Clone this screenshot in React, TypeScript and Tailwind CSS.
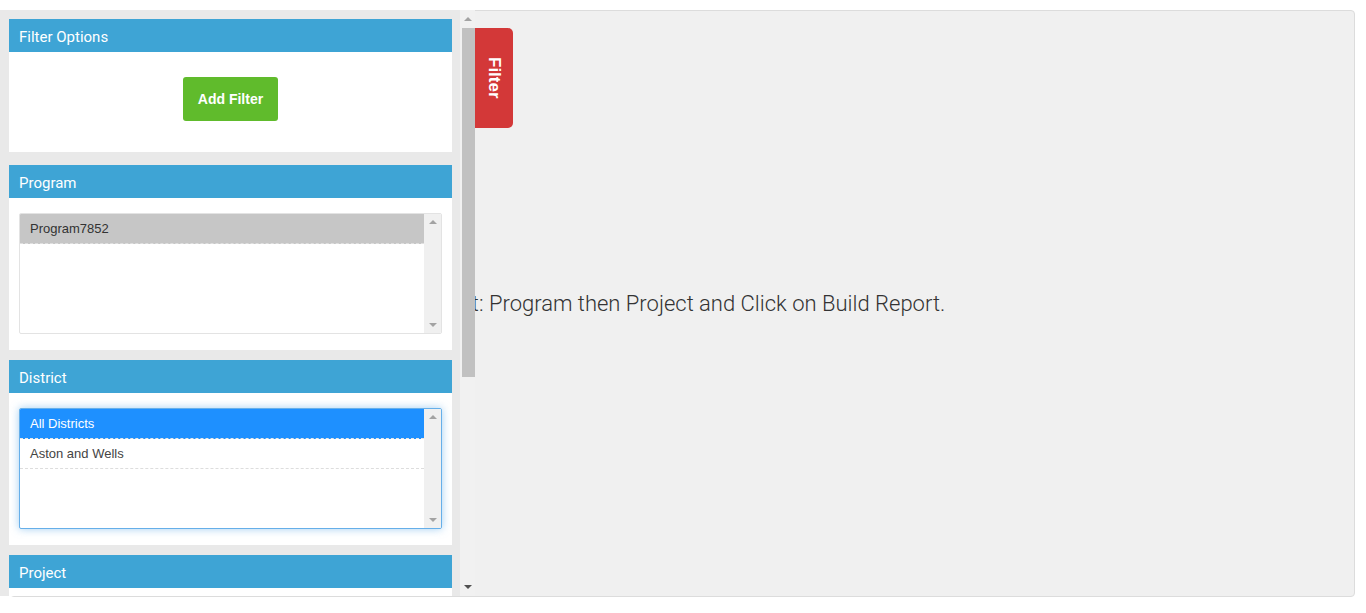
import React from 'react';

const sans = 'font-["Liberation_Sans",Arial,sans-serif]';

function PanelHeader({ title }: { title: string }) {
  return (
    <div className="h-[33px] bg-[#3ea4d5] pl-[10px] pt-[3px] flex items-center text-[15px] text-white font-['Roboto',sans-serif]">
      {title}
    </div>
  );
}

function ListScroll() {
  return (
    <div className="w-[17px] shrink-0 bg-[#f0f0f0] flex flex-col items-center justify-between pt-[6px] pb-[6px]">
      <span className="w-0 h-0 border-l-[4px] border-r-[4px] border-b-[4px] border-l-transparent border-r-transparent border-b-[#a3a3a3]" />
      <span className="w-0 h-0 border-l-[4px] border-r-[4px] border-t-[4px] border-l-transparent border-r-transparent border-t-[#a3a3a3]" />
    </div>
  );
}

interface Item {
  label: string;
  state?: 'selected' | 'active';
}

function ListBox({ items, focused }: { items: Item[]; focused?: boolean }) {
  return (
    <div
      className={`h-[121px] flex rounded-[2px] border overflow-hidden bg-white ${
        focused
          ? 'border-[#66afe9] shadow-[0_0_8px_rgba(102,175,233,0.6)]'
          : 'border-[#e3e3e3]'
      }`}
    >
      <ul className={`flex-1 min-w-0 ${sans} text-[13px]`}>
        {items.map((it) => (
          <li
            key={it.label}
            className={`h-[30px] pl-[10px] flex items-center border-b border-dashed ${
              it.state === 'active'
                ? 'bg-[#1e90ff] text-white border-b-[#e8e8e8]'
                : it.state === 'selected'
                  ? 'bg-[#c6c6c6] text-[#333] border-b-[#e0e0e0]'
                  : 'text-[#444] border-b-[#dddddd]'
            }`}
          >
            {it.label}
          </li>
        ))}
      </ul>
      <ListScroll />
    </div>
  );
}

export default function App() {
  return (
    <div className="relative h-[613px] bg-white overflow-hidden">
      <div className="pt-[10px] pl-[10px] pr-[11px]">
        <div className="h-[587px] bg-[#f0f0f0] border border-[#dcdcdc] rounded-[4px] flex items-center justify-center">
          <p className="text-[22px] font-light text-[#333] font-['Roboto',sans-serif]">
            Select: Program then Project and Click on Build Report.
          </p>
        </div>
      </div>

      <aside className="absolute left-0 top-[10px] h-[586px] flex">
        <div className="w-[460px] bg-[#e9e9e9] pl-[9px] pr-[8px] pt-[9px] overflow-hidden">
          <section className="mb-[13px]">
            <PanelHeader title="Filter Options" />
            <div className="h-[100px] bg-white flex justify-center pt-[25px]">
              <button
                type="button"
                className={`w-[95px] h-[44px] rounded-[3px] bg-[#60bb2c] text-white text-[14px] font-bold ${sans}`}
              >
                Add Filter
              </button>
            </div>
          </section>

          <section className="mb-[10px]">
            <PanelHeader title="Program" />
            <div className="h-[152px] bg-white pt-[15px] pl-[10px] pr-[10px]">
              <ListBox items={[{ label: 'Program7852', state: 'selected' }]} />
            </div>
          </section>

          <section className="mb-[10px]">
            <PanelHeader title="District" />
            <div className="h-[152px] bg-white pt-[15px] pl-[10px] pr-[10px]">
              <ListBox
                focused
                items={[{ label: 'All Districts', state: 'active' }, { label: 'Aston and Wells' }]}
              />
            </div>
          </section>

          <section>
            <PanelHeader title="Project" />
            <div className="h-[152px] bg-white" />
          </section>
        </div>

        <div className="w-[15px] bg-[#f1f1f1] flex flex-col">
          <div className="h-[18px] flex items-center justify-center">
            <span className="w-0 h-0 border-l-[4px] border-r-[4px] border-b-[4px] border-l-transparent border-r-transparent border-b-[#a3a3a3]" />
          </div>
          <div className="h-[349px] ml-[2px] bg-[#c1c1c1]" />
          <div className="flex-1" />
          <div className="h-[18px] flex items-center justify-center">
            <span className="w-0 h-0 border-l-[4px] border-r-[4px] border-t-[4px] border-l-transparent border-r-transparent border-t-[#505050]" />
          </div>
        </div>
      </aside>

      <button
        type="button"
        className={`absolute left-[475px] top-[28px] w-[38px] h-[100px] bg-[#d33838] rounded-r-[5px] flex items-center justify-center text-white text-[17px] font-bold ${sans}`}
      >
        <span className="[writing-mode:vertical-rl]">Filter</span>
      </button>
    </div>
  );
}
